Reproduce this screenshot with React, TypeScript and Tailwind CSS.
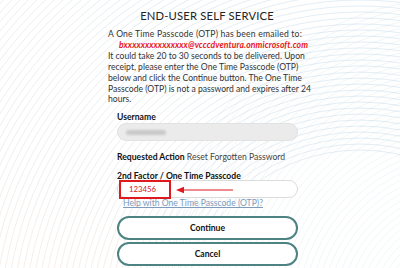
import React from "react";

const font = { fontFamily: "Lato, 'Open Sans', sans-serif" };

const message = [
  "It could take 20 to 30 seconds to be delivered. Upon",
  "receipt, please enter the One Time Passcode (OTP)",
  "below and click the Continue button. The One Time",
  "Passcode (OTP) is not a password and expires after 24",
  "hours.",
];

function Backdrop() {
  const left = Array.from({ length: 60 }, (_, i) => 180 + i * 6);
  const right = Array.from({ length: 40 }, (_, i) => 90 + i * 6);
  return (
    <svg className="absolute inset-0" width="400" height="268" viewBox="0 0 400 268">
      <defs>
        <linearGradient id="lg" x1="0" y1="0" x2="0" y2="1">
          <stop offset="0" stopColor="#9fc3dc" />
          <stop offset="0.45" stopColor="#e9c9b0" />
          <stop offset="1" stopColor="#f4b98a" />
        </linearGradient>
        <linearGradient id="rg" x1="0" y1="0" x2="1" y2="1">
          <stop offset="0" stopColor="#c9dbe8" />
          <stop offset="1" stopColor="#9fd0c8" />
        </linearGradient>
      </defs>
      <g fill="none" stroke="url(#lg)" strokeWidth="0.6" opacity="0.5">
        {left.map((r) => (
          <circle key={r} cx="360" cy="330" r={r} />
        ))}
      </g>
      <g fill="none" stroke="url(#rg)" strokeWidth="0.6" opacity="0.4">
        {right.map((r) => (
          <circle key={r} cx="470" cy="320" r={r} />
        ))}
      </g>
    </svg>
  );
}

export default function App() {
  return (
    <div className="relative w-[400px] h-[268px] overflow-hidden bg-white" style={font}>
      <Backdrop />
      <div className="relative flex flex-col w-[190px] ml-[108px] pt-[8px] text-[8.6px] leading-[10.9px] text-[#333]">
        <h1 className="text-center text-[11.2px] leading-[16px] tracking-[0.2px] text-[#222] ml-[8px] mb-[5px]">
          END-USER SELF SERVICE
        </h1>
        <p className="whitespace-nowrap tracking-[0.2px]">A One Time Passcode (OTP) has been emailed to:</p>
        <p className="pl-[11px] font-bold italic text-[#e8161b] whitespace-nowrap tracking-[0.1px]">
          bxxxxxxxxxxxxxxx@vcccdventura.onmicrosoft.com
        </p>
        <p className="whitespace-nowrap">
          {message.map((line) => (
            <span key={line} className="block">
              {line}
            </span>
          ))}
        </p>

        <div className="flex flex-col pl-[9px] mt-[7px]">
          <label className="font-bold text-[#111]">Username</label>
          <div className="h-[18px] rounded-full bg-[#ebebeb] border border-[#e2e2e2] flex items-center pl-[8px]">
            <span className="block w-[40px] h-[5px] rounded-sm bg-[#c9c9c9] blur-[1px]" />
          </div>

          <p className="mt-[11px] text-[#111]">
            <span className="font-bold">Requested Action</span>{" "}
            <span className="text-[#444]">Reset Forgotten Password</span>
          </p>

          <label className="mt-[9px] font-bold text-[#111] leading-[9px]">2nd Factor / One Time Passcode</label>
          <div className="relative mt-[-1px] h-[18px] rounded-full bg-white border border-[#dcdcdc] flex items-center">
            <div className="absolute left-[1px] top-[-1px] w-[52px] h-[19px] border-2 border-[#e0191f] flex items-center pl-[8px]">
              <span className="text-[#d8181e] text-[7.8px] leading-none">123456</span>
            </div>
            <svg className="absolute left-[58px] top-[5px]" width="58" height="8" viewBox="0 0 58 8">
              <line x1="6" y1="4" x2="57" y2="4" stroke="#e0191f" strokeWidth="1.2" />
              <path d="M0 4 L8 0.8 L8 7.2 Z" fill="#e0191f" />
            </svg>
          </div>
          <a className="ml-[6px] underline text-[#7d9bbb]">Help with One Time Passcode (OTP)?</a>

          <button className="mt-[7px] h-[24px] rounded-full border-2 border-[#4e8384] bg-white font-bold text-[#111]">
            Continue
          </button>
          <button className="mt-[2px] h-[24px] rounded-full border-2 border-[#4e8384] bg-white font-bold text-[#111]">
            Cancel
          </button>
        </div>
      </div>
    </div>
  );
}
